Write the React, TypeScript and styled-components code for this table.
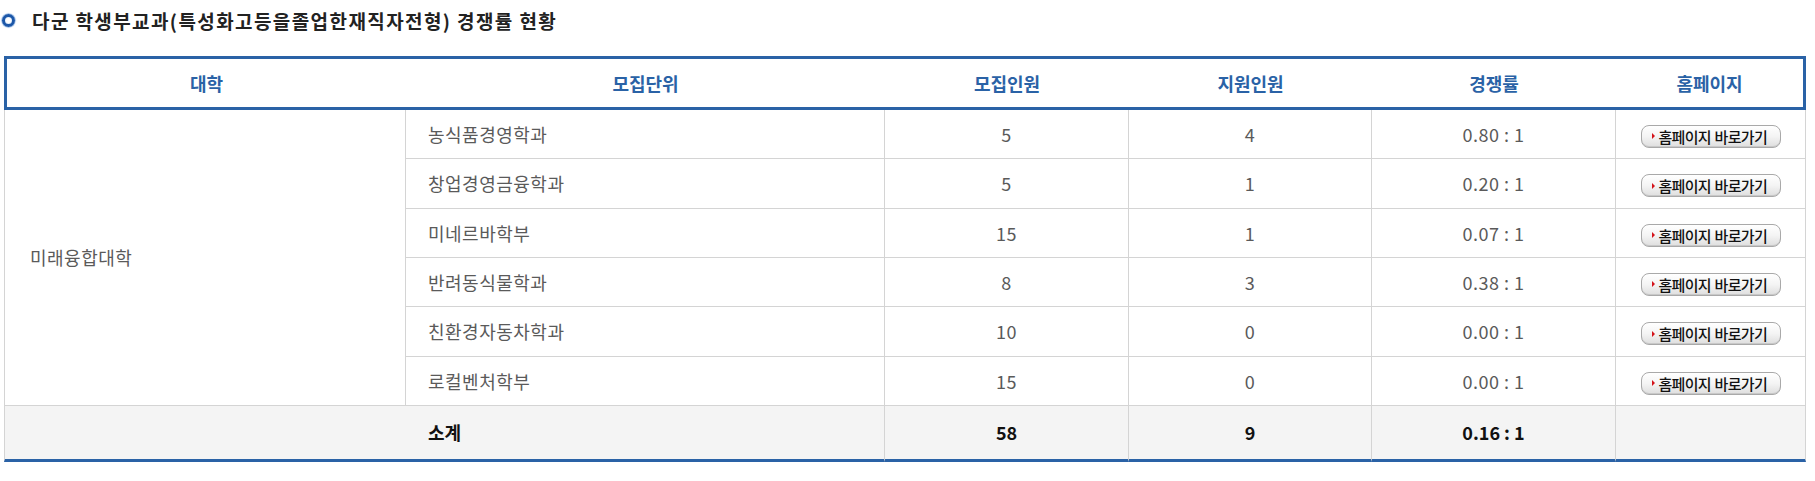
import styled, { createGlobalStyle } from 'styled-components'

const GlobalStyle = createGlobalStyle`
	* {
		box-sizing: border-box;
	}
	body {
		margin: 0;
		background: #ffffff;
		font-family: 'Noto Sans CJK KR', 'Noto Sans', sans-serif;
	}
`

const BLUE = '#2a62a6'
const LINE = '#d4d4d4'

const Page = styled.div`
	width: 1815px;
	padding: 6px 0 0 4px;
`

const Title = styled.h2`
	display: flex;
	align-items: center;
	gap: 17px;
	height: 28px;
	margin: 0;
	font-size: 19px;
	font-weight: 700;
	color: #222;
	letter-spacing: 1.4px;
`

const Bullet = styled.span`
	flex-shrink: 0;
	width: 13px;
	height: 13px;
	margin-left: -2px;
	border-radius: 50%;
	border: 3.5px solid #1c57a8;
	background: radial-gradient(circle, #ffffff 0 40%, #bcd5f2 100%);
	box-shadow: 0 0 1px 0.5px #5b92d8;
`

const Table = styled.table`
	width: 1802px;
	margin-top: 22px;
	border-collapse: separate;
	border-spacing: 0;
	table-layout: fixed;
`

const HeadCell = styled.th`
	height: 54px;
	padding: 0;
	border-top: 3px solid ${BLUE};
	border-bottom: 3px solid ${BLUE};
	font-size: 18px;
	font-weight: 700;
	color: ${BLUE};
	text-align: center;
	&:first-child {
		border-left: 3px solid ${BLUE};
	}
	&:last-child {
		border-right: 3px solid ${BLUE};
	}
`

const Cell = styled.td<{ $align?: 'left' | 'center'; $first?: boolean }>`
	height: 49.33px;
	padding: 0;
	padding-left: ${(p) => (p.$align === 'left' ? (p.$first ? '25px' : '22px') : '0')};
	border-right: 1px solid ${LINE};
	border-bottom: 1px solid ${LINE};
	border-left: ${(p) => (p.$first ? `1px solid ${LINE}` : '0')};
	font-size: 18px;
	letter-spacing: 0.5px;
	color: #5a5a5a;
	text-align: ${(p) => p.$align ?? 'center'};
	vertical-align: middle;
`

const SumCell = styled.td<{ $first?: boolean }>`
	height: 56px;
	padding: 0;
	background: #f4f4f4;
	border-right: 1px solid ${LINE};
	border-bottom: 3px solid ${BLUE};
	border-left: ${(p) => (p.$first ? `1px solid ${LINE}` : '0')};
	font-size: 18px;
	font-weight: 700;
	color: #111;
	text-align: center;
`

const LinkButton = styled.a`
	display: inline-flex;
	align-items: center;
	width: 140px;
	height: 23px;
	padding-left: 10px;
	gap: 4px;
	border: 1px solid #a9a9a9;
	border-radius: 8px;
	background: linear-gradient(#ffffff, #f4f4f4 50%, #dedede);
	box-shadow: inset 0 -1px 0 #c8c8c8;
	font-size: 15px;
	font-weight: 500;
	letter-spacing: -0.7px;
	word-spacing: 1px;
	color: #111;
	text-decoration: none;
	vertical-align: middle;
	&::before {
		content: '';
		flex-shrink: 0;
		width: 0;
		height: 0;
		border-top: 3px solid transparent;
		border-bottom: 3px solid transparent;
		border-left: 3px solid #d4131a;
	}
`

const rows = [
	{ unit: '농식품경영학과', quota: 5, applied: 4, rate: '0.80 : 1' },
	{ unit: '창업경영금융학과', quota: 5, applied: 1, rate: '0.20 : 1' },
	{ unit: '미네르바학부', quota: 15, applied: 1, rate: '0.07 : 1' },
	{ unit: '반려동식물학과', quota: 8, applied: 3, rate: '0.38 : 1' },
	{ unit: '친환경자동차학과', quota: 10, applied: 0, rate: '0.00 : 1' },
	{ unit: '로컬벤처학부', quota: 15, applied: 0, rate: '0.00 : 1' },
]

const App = () => {
	return (
		<>
			<GlobalStyle />
			<Page>
				<Title>
					<Bullet />
					다군 학생부교과(특성화고등을졸업한재직자전형) 경쟁률 현황
				</Title>
				<Table>
					<colgroup>
						<col style={{ width: '402px' }} />
						<col style={{ width: '479px' }} />
						<col style={{ width: '244px' }} />
						<col style={{ width: '243px' }} />
						<col style={{ width: '244px' }} />
						<col style={{ width: '190px' }} />
					</colgroup>
					<thead>
						<tr>
							<HeadCell>대학</HeadCell>
							<HeadCell>모집단위</HeadCell>
							<HeadCell>모집인원</HeadCell>
							<HeadCell>지원인원</HeadCell>
							<HeadCell>경쟁률</HeadCell>
							<HeadCell>홈페이지</HeadCell>
						</tr>
					</thead>
					<tbody>
						{rows.map((r, i) => (
							<tr key={r.unit}>
								{i === 0 && (
									<Cell rowSpan={rows.length} $align='left' $first>
										미래융합대학
									</Cell>
								)}
								<Cell $align='left'>{r.unit}</Cell>
								<Cell>{r.quota}</Cell>
								<Cell>{r.applied}</Cell>
								<Cell>{r.rate}</Cell>
								<Cell>
									<LinkButton href='#'>홈페이지 바로가기</LinkButton>
								</Cell>
							</tr>
						))}
						<tr>
							<SumCell colSpan={2} $first>
								소계
							</SumCell>
							<SumCell>58</SumCell>
							<SumCell>9</SumCell>
							<SumCell>0.16 : 1</SumCell>
							<SumCell />
						</tr>
					</tbody>
				</Table>
			</Page>
		</>
	)
}

export default App
